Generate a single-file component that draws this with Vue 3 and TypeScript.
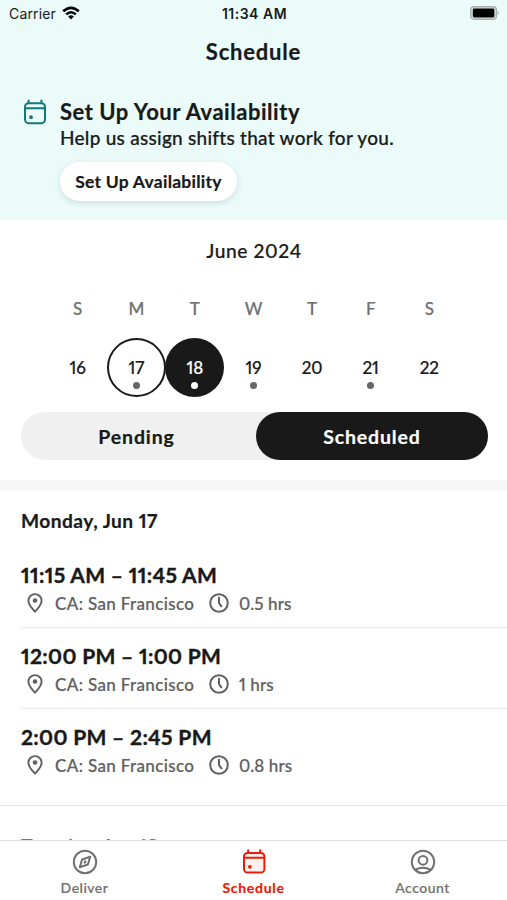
<script setup lang="ts">
interface Day {
  letter: string
  date: number
  state?: 'today' | 'selected'
  dot?: boolean
}

interface Shift {
  time: string
  place: string
  hours: string
}

const days: Day[] = [
  { letter: 'S', date: 16 },
  { letter: 'M', date: 17, state: 'today', dot: true },
  { letter: 'T', date: 18, state: 'selected', dot: true },
  { letter: 'W', date: 19, dot: true },
  { letter: 'T', date: 20 },
  { letter: 'F', date: 21, dot: true },
  { letter: 'S', date: 22 },
]

const shifts: Shift[] = [
  { time: '11:15 AM – 11:45 AM', place: 'CA: San Francisco', hours: '0.5 hrs' },
  { time: '12:00 PM – 1:00 PM', place: 'CA: San Francisco', hours: '1 hrs' },
  { time: '2:00 PM – 2:45 PM', place: 'CA: San Francisco', hours: '0.8 hrs' },
]
</script>

<template>
  <div class="screen">
    <header class="hero">
      <div class="status">
        <div class="carrier">
          <span>Carrier</span>
          <svg width="18" height="14" viewBox="0 0 18 14">
            <path d="M0.3 4.3Q9-3.3 17.7 4.3L15.9 6.2Q9 0.1 2.1 6.2Z" />
            <path d="M3.3 7.4Q9 2.4 14.7 7.4L12.9 9.3Q9 5.8 5.1 9.3Z" />
            <path d="M6.2 10.5Q9 8 11.8 10.5L9 13.4Z" />
          </svg>
        </div>
        <span class="clock">11:34 AM</span>
        <svg class="battery" width="30" height="14" viewBox="0 0 30 14">
          <rect x="0.8" y="0.8" width="25.6" height="12.4" rx="3.4" fill="#dce8e6" stroke="#a5afad" stroke-width="1.4" />
          <rect x="2.8" y="2.6" width="21.6" height="8.8" rx="1.4" />
          <path d="M27.6 4.8Q30 7 27.6 9.2Z" fill="#a5afad" />
        </svg>
      </div>
      <h1 class="title"><span>Schedule</span></h1>
      <div class="promo">
        <svg class="promo-icon" width="24" height="26" viewBox="0 0 24 26" fill="none" stroke="#157678" stroke-width="2">
          <rect x="2" y="4.2" width="20" height="20" rx="3.6" />
          <path d="M2 9.3H22M5.6 0.8V4.4M18.4 0.8V4.4" />
          <circle cx="8" cy="18.2" r="1.9" fill="#157678" stroke="none" />
        </svg>
        <div class="promo-body">
          <h2><span>Set Up Your Availability</span></h2>
          <p><span>Help us assign shifts that work for you.</span></p>
          <button type="button"><span>Set Up Availability</span></button>
        </div>
      </div>
    </header>

    <section class="calendar">
      <div class="month"><span>June 2024</span></div>
      <div class="week">
        <div v-for="day in days" :key="day.date" class="day">
          <span class="letter">{{ day.letter }}</span>
          <div class="date" :class="day.state">
            <span>{{ day.date }}</span>
            <i v-if="day.dot" class="dot"></i>
          </div>
        </div>
      </div>
      <div class="tabs">
        <div class="tab pending"><span>Pending</span></div>
        <div class="tab active"><span>Scheduled</span></div>
      </div>
    </section>

    <main class="list">
      <h3 class="heading"><span>Monday, Jun 17</span></h3>
      <article v-for="shift in shifts" :key="shift.time" class="shift">
        <div class="time"><span>{{ shift.time }}</span></div>
        <div class="meta">
          <svg width="16" height="20" viewBox="0 0 16 20" fill="none" stroke="#606060" stroke-width="1.9">
            <path d="M8 18.7C5.6 16 1.4 12 1.4 7.7A6.6 6.6 0 0 1 14.6 7.7C14.6 12 10.4 16 8 18.7Z" stroke-linejoin="round" />
            <circle cx="8" cy="7.5" r="2.3" fill="#606060" stroke="none" />
          </svg>
          <span class="place">{{ shift.place }}</span>
          <svg width="20" height="20" viewBox="0 0 20 20" fill="none" stroke="#606060" stroke-width="2">
            <circle cx="10" cy="10" r="8.8" />
            <path d="M10 4.8V10L12.4 13.3" stroke-linecap="round" />
          </svg>
          <span class="hours">{{ shift.hours }}</span>
        </div>
      </article>
      <h3 class="heading next"><span>Tuesday, Jun 18</span></h3>
    </main>

    <nav class="bar">
      <div class="item">
        <svg width="26" height="26" viewBox="0 0 26 26" fill="none" stroke="#707070" stroke-width="2">
          <circle cx="13" cy="13" r="11.2" />
          <path d="M18.2 7.7L15.9 15.5L7.8 18.3L10.1 10.5Z" stroke-linejoin="round" />
          <path d="M13.8 11.6L12.2 14.4" />
        </svg>
        <span>Deliver</span>
      </div>
      <div class="item current">
        <svg width="26" height="26" viewBox="0 0 26 26" fill="none" stroke="#e3200d" stroke-width="2">
          <rect x="3" y="4" width="20.4" height="19.6" rx="3.6" fill="#fff0ed" />
          <path d="M3 8.8H23.4M7.2 0.5V4M19.2 0.5V4" />
          <circle cx="8.9" cy="17.8" r="1.9" fill="#e3200d" stroke="none" />
        </svg>
        <span>Schedule</span>
      </div>
      <div class="item">
        <svg width="26" height="26" viewBox="0 0 26 26" fill="none" stroke="#707070" stroke-width="2">
          <circle cx="13" cy="13" r="11.2" />
          <circle cx="13" cy="11.3" r="4.4" />
          <path d="M5.2 20.8Q13 16.6 20.8 20.8" />
        </svg>
        <span>Account</span>
      </div>
    </nav>
  </div>
</template>

<style>
body {
  margin: 0;
  overflow: hidden;
}
</style>

<style scoped>
* {
  box-sizing: border-box;
}
.screen {
  width: 507px;
  height: 900px;
  overflow: hidden;
  display: flex;
  flex-direction: column;
  background: #fff;
  color: #191919;
  font-family: Lato, "Liberation Sans", sans-serif;
  font-variant-numeric: proportional-nums;
  -webkit-text-stroke: 0.2px currentColor;
  white-space: nowrap;
}
h1, h2, h3, p {
  margin: 0;
}
svg {
  display: block;
  flex: none;
}
.hero {
  height: 220px;
  flex: none;
  background: #eafbfa;
}
.status {
  height: 28px;
  padding: 0 7px 2px 9px;
  display: grid;
  grid-template-columns: 1fr auto 1fr;
  align-items: center;
  font-family: Inter, sans-serif;
  font-size: 14px;
  -webkit-text-stroke: 0;
}
.carrier {
  display: flex;
  align-items: center;
  gap: 6px;
  letter-spacing: 0.15px;
}
.carrier svg {
  margin-top: -1px;
}
.clock {
  font-weight: 600;
  letter-spacing: 0.5px;
}
.battery {
  justify-self: end;
}
.title {
  height: 48px;
  display: flex;
  align-items: center;
  justify-content: center;
  font-size: 22px;
  line-height: 24px;
  letter-spacing: 0.8px;
}
.promo {
  display: flex;
  gap: 13px;
  padding: 23px 0 0 23px;
}
.promo-body h2 {
  font-size: 22px;
  line-height: 25px;
  height: 27px;
  letter-spacing: 0.53px;
}
.promo-body p {
  font-size: 19px;
  line-height: 23px;
  font-weight: 500;
  letter-spacing: 0.27px;
}
.promo-body button {
  width: 177px;
  height: 39px;
  margin-top: 13px;
  padding: 0;
  border: 0;
  border-radius: 20px;
  background: #fff;
  box-shadow: 0 2px 6px rgba(0, 40, 40, 0.14);
  color: #191919;
  font: 700 17.5px/20px Lato, sans-serif;
  letter-spacing: 0.25px;
}
.calendar {
  height: 270px;
  flex: none;
  border-bottom: 10px solid #f7f7f7;
}
.month {
  height: 62px;
  padding-left: 1px;
  text-align: center;
  font-size: 19.2px;
  line-height: 62px;
  font-weight: 500;
  letter-spacing: 0.6px;
}
.week {
  display: grid;
  grid-template-columns: repeat(7, 58.6px);
  justify-content: center;
  height: 130px;
}
.day {
  display: flex;
  flex-direction: column;
  align-items: center;
}
.letter {
  height: 56px;
  line-height: 54px;
  font-size: 17px;
  font-weight: 500;
  color: #707070;
}
.date {
  width: 59px;
  height: 59px;
  border-radius: 50%;
  display: flex;
  flex-direction: column;
  align-items: center;
  padding-top: 20px;
  font-size: 17px;
  line-height: 20px;
  font-weight: 500;
}
.today {
  border: 2px solid #191919;
  padding-top: 18px;
}
.selected {
  background: #191919;
  color: #fff;
}
.dot {
  width: 7px;
  height: 7px;
  margin-top: 4px;
  border-radius: 50%;
  background: #666;
}
.selected .dot {
  background: #fff;
}
.tabs {
  display: flex;
  height: 48px;
  margin: 0 19px 0 21px;
  border-radius: 24px;
  background: #f0f0f0;
  font-size: 19.5px;
  font-weight: 700;
  letter-spacing: 0.85px;
}
.tab {
  display: flex;
  align-items: center;
  justify-content: center;
}
.pending {
  width: 235px;
  padding-right: 4px;
}
.active {
  flex: 1;
  border-radius: 24px;
  background: #191919;
  color: #fff;
}
.list {
  flex: 1;
  min-height: 0;
  overflow: hidden;
}
.heading {
  height: 57px;
  padding-left: 21px;
  font-size: 19.2px;
  line-height: 62px;
  letter-spacing: 0.45px;
}
.shift {
  height: 81px;
  margin-left: 21px;
  padding-top: 14px;
  border-bottom: 1px solid #e8e8e8;
}
.shift:nth-of-type(3) {
  height: 97px;
  margin-left: 0;
  padding-left: 21px;
}
.time {
  height: 28px;
  font-size: 21px;
  line-height: 28px;
  font-weight: 700;
  letter-spacing: 0.33px;
  -webkit-text-stroke-width: 0.4px;
}
.meta {
  display: flex;
  align-items: center;
  height: 28px;
  padding-left: 6px;
  font-size: 17px;
  font-weight: 500;
  color: #606060;
}
.place {
  width: 140px;
  margin: 0 14px 0 12px;
  letter-spacing: 0.36px;
}
.hours {
  margin-left: 10px;
  letter-spacing: 0.1px;
}
.next {
  height: 80px;
  line-height: 80px;
  color: #777;
}
.bar {
  height: 60px;
  flex: none;
  padding-top: 8px;
  display: grid;
  grid-template-columns: repeat(3, 1fr);
  border-top: 1px solid #dedede;
  background: #fff;
  color: #707070;
  font-size: 14px;
  font-weight: 500;
  letter-spacing: 0.5px;
}
.item {
  display: flex;
  flex-direction: column;
  align-items: center;
  line-height: 26px;
}
.current {
  color: #e3200d;
  font-weight: 700;
  letter-spacing: 0.7px;
}
</style>
